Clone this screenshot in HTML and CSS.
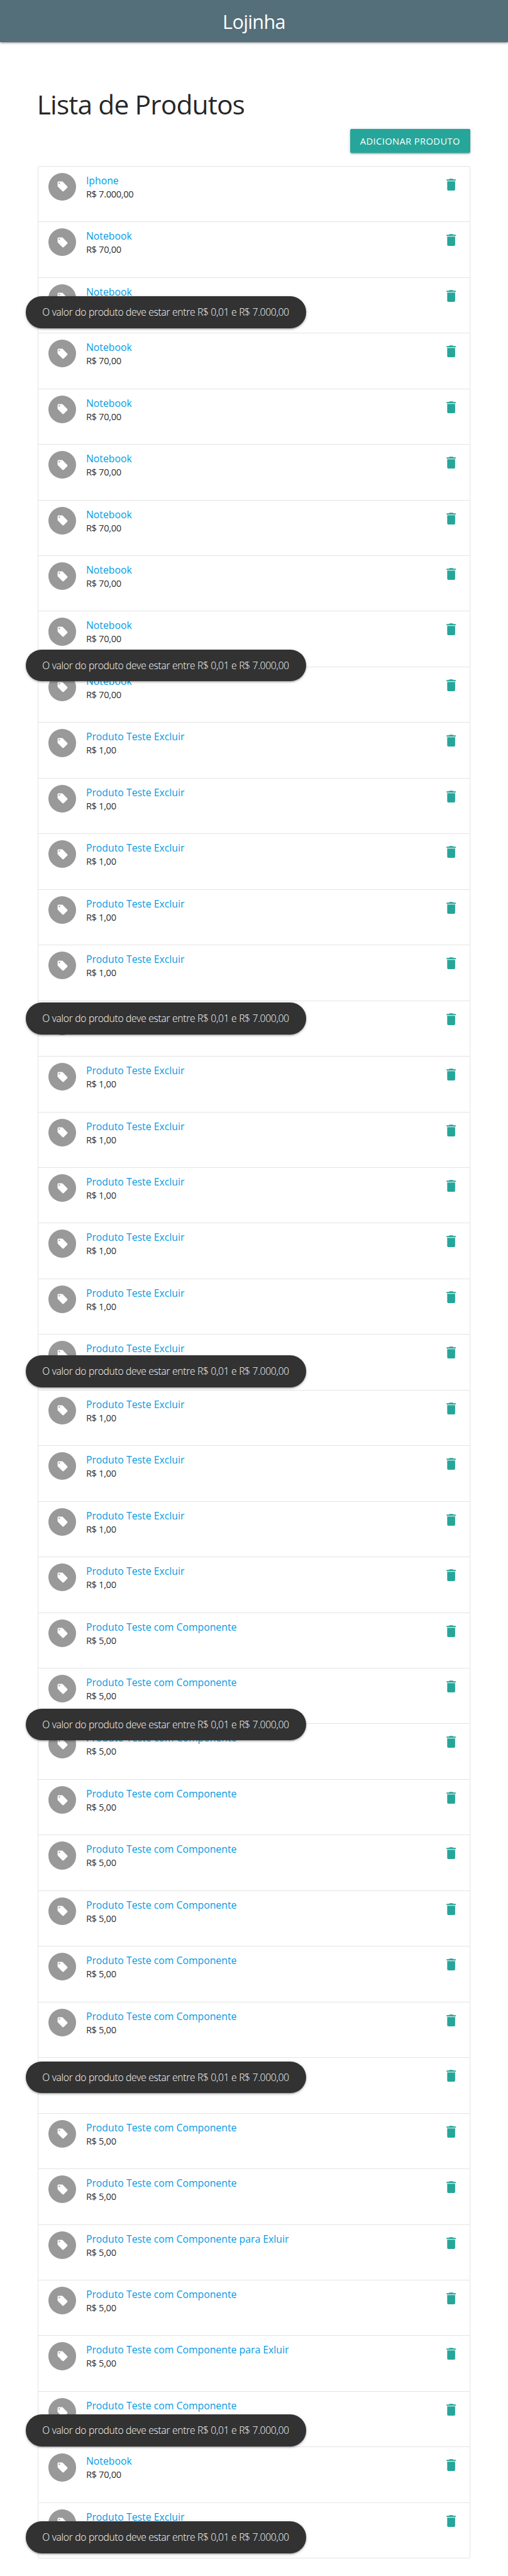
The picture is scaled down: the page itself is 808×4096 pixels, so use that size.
FILE: index.html
```
<!DOCTYPE html>
<html lang="pt-BR">
<head>
<meta charset="utf-8">
<title>Lojinha</title>
<link rel="stylesheet" href="styles.css">
</head>
<body>
<svg class="sprite" aria-hidden="true">
  <symbol id="tag" viewBox="0 0 24 24"><path d="M21.41 11.58l-9-9C12.05 2.22 11.55 2 11 2H4c-1.1 0-2 .9-2 2v7c0 .55.22 1.05.59 1.42l9 9c.36.36.86.58 1.41.58.55 0 1.05-.22 1.41-.59l7-7c.37-.36.59-.86.59-1.41 0-.55-.23-1.06-.59-1.42zM5.5 7C4.67 7 4 6.33 4 5.5S4.67 4 5.5 4 7 4.67 7 5.5 6.33 7 5.5 7z"/></symbol>
  <symbol id="trash" viewBox="0 0 24 24"><path d="M6 19c0 1.1.9 2 2 2h8c1.1 0 2-.9 2-2V7H6v12zM19 4h-3.500l-1-1h-5l-1 1H5v2h14V4z"/></symbol>
</svg>
<nav class="navbar"><a class="brand">Lojinha</a></nav>
<main class="container">
  <h1 class="title">Lista de Produtos</h1>
  <div class="actions"><button class="btn">Adicionar produto</button></div>
  <ul class="collection" id="products"></ul>
</main>
<div id="toasts"></div>
<script src="app.js"></script>
</body>
</html>
```
FILE: styles.css
```
* { box-sizing: border-box; }
body {
  position: relative;
  margin: 0;
  height: 4096px;
  overflow-x: hidden;
  background: #fff;
  color: rgba(0, 0, 0, 0.87);
  font-family: "Segoe UI", "Open Sans", "Noto Sans", sans-serif;
}
.sprite { display: none; }
.navbar {
  display: flex;
  justify-content: center;
  height: 67.3px;
  background: #546e7a;
  box-shadow: 0 2px 2px 0 rgba(0,0,0,.14), 0 3px 1px -2px rgba(0,0,0,.12), 0 1px 5px 0 rgba(0,0,0,.2);
}
.brand {
  color: #fff;
  font-size: 30.5px;
  line-height: 69px;
  letter-spacing: -0.6px;
}
.container { width: 687.4px; margin: 0 auto; }
.title {
  margin: 0 0 0 -1.5px;
  height: 137.5px;
  padding-top: 74.4px;
  font-size: 42.5px;
  font-weight: 400;
  line-height: 47px;
  letter-spacing: -0.9px;
  white-space: nowrap;
}
.actions { display: flex; justify-content: flex-end; height: 59px; }
.btn {
  width: 190.8px;
  height: 37.9px;
  padding: 2px 0 0;
  border: 0;
  border-radius: 2px;
  background: #26a69a;
  color: #fff;
  font: 400 14.7px/35.9px "Segoe UI", "Open Sans", sans-serif;
  letter-spacing: 0.4px;
  text-transform: uppercase;
  white-space: nowrap;
  box-shadow: 0 2px 2px 0 rgba(0,0,0,.14), 0 3px 1px -2px rgba(0,0,0,.12), 0 1px 5px 0 rgba(0,0,0,.2);
}
.collection {
  margin: 0;
  padding: 0;
  list-style: none;
  border: 1px solid #e4e4e4;
  border-radius: 2px;
}
.item {
  display: flex;
  height: 88.46px;
  padding: 10px 17px 0 16px;
  border-bottom: 1px solid #e4e4e4;
}
.item:last-child { border-bottom: 0; height: 87.5px; }
.avatar {
  display: flex;
  align-items: center;
  justify-content: center;
  flex: none;
  width: 44.2px;
  height: 44.2px;
  border-radius: 50%;
  background: #999;
}
.avatar svg { width: 19px; height: 19px; fill: #fff; }
.text { flex: 1; padding: 1px 0 0 15.4px; white-space: nowrap; }
.name {
  display: block;
  color: #039be5;
  font-size: 15.8px;
  line-height: 22px;
}
.price { display: block; font-size: 14.7px; line-height: 21.6px; letter-spacing: -0.35px; }
.trash { flex: none; width: 25.2px; height: 25.2px; margin-top: 6px; fill: #26a69a; }
.toast {
  position: absolute;
  left: 40.8px;
  width: 445.9px;
  height: 50.5px;
  padding-left: 26.5px;
  border-radius: 25.2px;
  background: #323232;
  color: #fff;
  font-size: 15.6px;
  font-weight: 300;
  line-height: 50.5px;
  letter-spacing: -0.28px;
  white-space: nowrap;
  box-shadow: 0 2px 2px 0 rgba(0,0,0,.14), 0 3px 1px -2px rgba(0,0,0,.12), 0 1px 5px 0 rgba(0,0,0,.2);
}
```
FILE: app.js
```
const groups = [
  [1, "Iphone", "R$ 7.000,00"],
  [9, "Notebook", "R$ 70,00"],
  [16, "Produto Teste Excluir", "R$ 1,00"],
  [11, "Produto Teste com Componente", "R$ 5,00"],
  [1, "Produto Teste com Componente para Exluir", "R$ 5,00"],
  [1, "Produto Teste com Componente", "R$ 5,00"],
  [1, "Produto Teste com Componente para Exluir", "R$ 5,00"],
  [1, "Produto Teste com Componente", "R$ 5,00"],
  [1, "Notebook", "R$ 70,00"],
  [1, "Produto Teste Excluir", "R$ 1,00"]
];
document.getElementById("products").innerHTML = groups.map(([count, name, price]) =>
  `<li class="item"><span class="avatar"><svg><use href="#tag"/></svg></span><div class="text"><a class="name">${name}</a><span class="price">${price}</span></div><svg class="trash"><use href="#trash"/></svg></li>`.repeat(count)
).join("");

const toastTops = [471.4, 1032.7, 1594, 2155.3, 2716.6, 3277.9, 3839.2, 4009];
document.getElementById("toasts").innerHTML = toastTops.map(top =>
  `<div class="toast" style="top:${top}px">O valor do produto deve estar entre R$ 0,01 e R$ 7.000,00</div>`
).join("");
```
